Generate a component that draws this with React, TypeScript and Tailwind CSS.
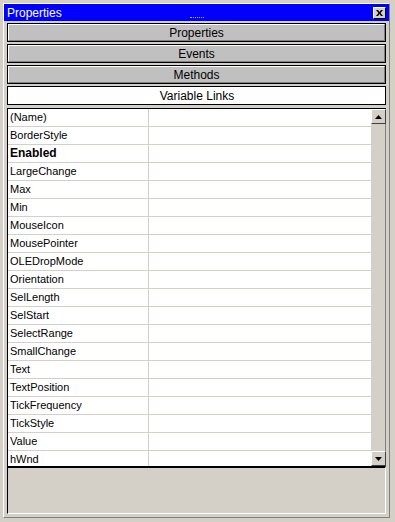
const rows = [
  "(Name)",
  "BorderStyle",
  "Enabled",
  "LargeChange",
  "Max",
  "Min",
  "MouseIcon",
  "MousePointer",
  "OLEDropMode",
  "Orientation",
  "SelLength",
  "SelStart",
  "SelectRange",
  "SmallChange",
  "Text",
  "TextPosition",
  "TickFrequency",
  "TickStyle",
  "Value",
  "hWnd",
];

function TabButton({ label, active }: { label: string; active?: boolean }) {
  return (
    <div className="border border-black">
      <div
        className={`flex h-[17px] items-center justify-center border-t border-l border-white text-[12px] text-black ${
          active ? "bg-white" : "bg-[#c0c0c0] border-b border-b-[#808080] border-r border-r-[#808080]"
        }`}
      >
        {label}
      </div>
    </div>
  );
}

export default function App() {
  return (
    <div
      className="h-[522px] w-[395px] bg-[#d4d0c8] p-[3px]"
      style={{ fontFamily: '"Liberation Sans", Arial, sans-serif' }}
    >
      <div className="flex h-[515px] w-[387px] flex-col border-r border-b border-[#808080] border-t-white border-l-white border-t border-l">
        {/* title bar */}
        <div className="relative flex h-[17px] items-center bg-[#0000ff] px-[3px]">
          <span className="text-[12px] leading-none text-white">Properties</span>
          <div className="absolute left-1/2 top-[13px] h-px w-[14px] -translate-x-1/2 border-t border-dotted border-[#a0c0ff]" />
          <div className="ml-auto flex h-[12px] w-[13px] items-center justify-center border border-t-white border-l-white border-r-black border-b-black bg-[#d4d0c8]">
            <svg width="7" height="6" viewBox="0 0 7 6">
              <path d="M0 0h2l1.5 2L5 0h2L4.5 3 7 6H5L3.5 4 2 6H0l2.5-3z" fill="#000" />
            </svg>
          </div>
        </div>

        <div className="flex flex-1 flex-col gap-[2px] px-[3px] pt-[2px]">
          <TabButton label="Properties" />
          <TabButton label="Events" />
          <TabButton label="Methods" />
          <TabButton label="Variable Links" active />

          {/* grid */}
          <div className="mt-[1px] flex h-[358px] shrink-0 overflow-hidden border-t border-l border-black bg-white">
            <div className="flex-1 overflow-hidden">
              {rows.map((r) => (
                <div key={r} className="flex h-[18px] border-b border-[#d4d0c8]">
                  <div
                    className={`w-[141px] shrink-0 border-r border-[#d4d0c8] pl-[2px] text-[11px] leading-[17px] text-black ${
                      r === "Enabled" ? "font-bold text-[12px]" : ""
                    }`}
                  >
                    {r}
                  </div>
                  <div className="flex-1" />
                </div>
              ))}
            </div>
            <div className="flex w-[15px] flex-col bg-[#e8e4dc]">
              <div className="flex h-[15px] items-center justify-center border border-t-white border-l-white border-r-[#404040] border-b-[#404040] bg-[#d4d0c8]">
                <svg width="7" height="4" viewBox="0 0 7 4">
                  <path d="M3.5 0L7 4H0z" fill="#000" />
                </svg>
              </div>
              <div className="flex-1 border-r border-[#808080] bg-[#d4d0c8]" />
              <div className="flex h-[15px] items-center justify-center border border-t-white border-l-white border-r-[#404040] border-b-[#404040] bg-[#d4d0c8]">
                <svg width="7" height="4" viewBox="0 0 7 4">
                  <path d="M0 0h7L3.5 4z" fill="#000" />
                </svg>
              </div>
            </div>
          </div>

          {/* bottom description area */}
          <div className="-mt-[2px] mb-[3px] flex-1 border-t-2 border-l border-black border-r border-r-white border-b border-b-white bg-[#d4d0c8]" />
        </div>
      </div>
    </div>
  );
}
